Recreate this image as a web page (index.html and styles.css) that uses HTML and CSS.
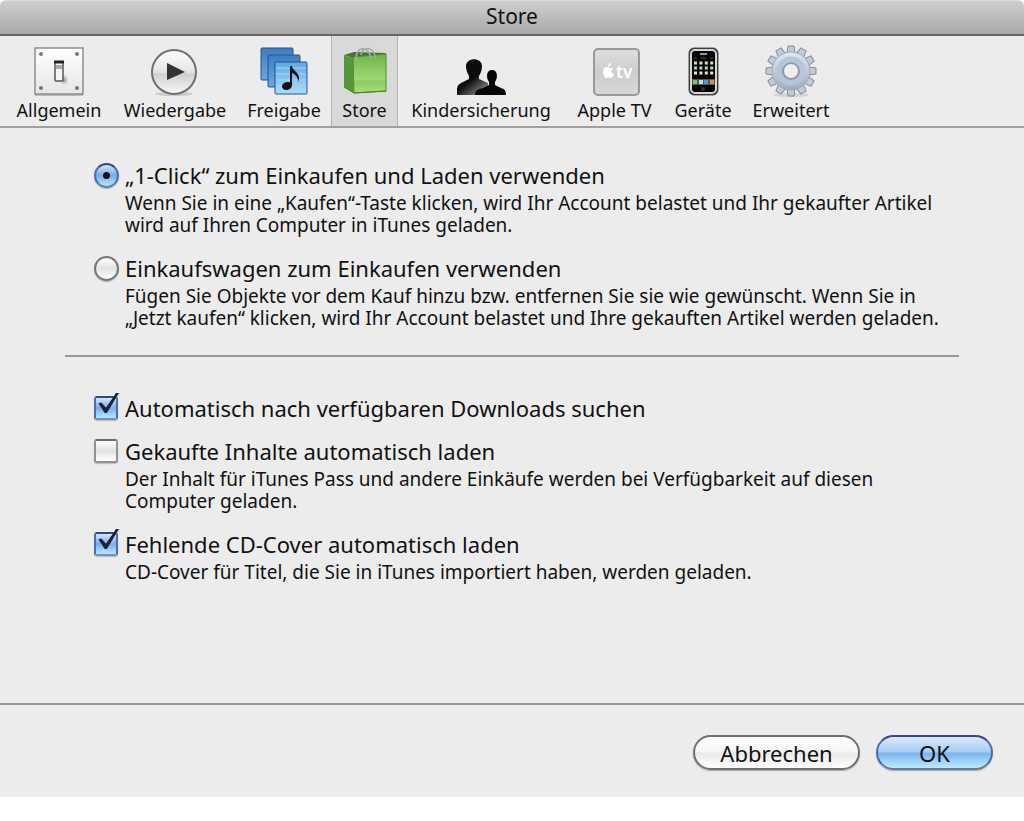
FILE: index.html
```html
<!DOCTYPE html>
<html lang="de">
	<head>
		<meta charset="UTF-8">
		<meta content="width=device-width, initial-scale=1" name="viewport">
		<title>Store</title>
		<link rel="stylesheet" href="styles.css">
	</head>
	<body>
		<form class="window">
			<h1>Store</h1>
			<nav class="toolbar">
				<button type="button" class="tab general">
					<svg viewBox="0 0 52 52">
						<defs>
							<linearGradient id="plate" x2="0" y2="1"><stop offset="0" stop-color="#fff"/><stop offset="1" stop-color="#e6e6e6"/></linearGradient>
							<radialGradient id="shade"><stop offset="0" stop-color="#888"/><stop offset="1" stop-color="#eee" stop-opacity="0"/></radialGradient>
						</defs>
						<rect x="2" y="3" width="48" height="46" fill="url(#plate)" stroke="#8e8e8e" stroke-width="1.5"/>
						<path d="M2 50h48" stroke="#888"/>
						<g fill="#777"><circle cx="8" cy="9" r="2"/><circle cx="44" cy="9" r="2"/><circle cx="8" cy="43" r="2"/><circle cx="44" cy="43" r="2"/></g>
						<ellipse cx="31" cy="35" rx="6" ry="7" fill="url(#shade)"/>
						<rect x="22" y="17" width="8" height="19" rx="1" fill="#f4f4f4" stroke="#555" stroke-width="1.5"/>
						<path d="M21 17h10" stroke="#222" stroke-width="3"/>
						<path d="M23 22h6" stroke="#aaa" stroke-width="4"/>
					</svg>
					Allgemein
				</button>
				<button type="button" class="tab playback">
					<svg viewBox="0 0 52 52">
						<defs>
							<linearGradient id="disc" x2="0" y2="1"><stop offset="0" stop-color="#fff"/><stop offset=".5" stop-color="#e4e4e4"/><stop offset=".55" stop-color="#d0d0d0"/><stop offset="1" stop-color="#f8f8f8"/></linearGradient>
						</defs>
						<ellipse cx="25" cy="49" rx="19" ry="2" fill="#ccc"/>
						<circle cx="25" cy="27" r="22" fill="url(#disc)" stroke="#707070" stroke-width="2"/>
						<path d="M18 18v17l18-8z" fill="#333"/>
					</svg>
					Wiedergabe
				</button>
				<button type="button" class="tab sharing">
					<svg viewBox="0 0 52 52">
						<defs>
							<linearGradient id="sheet" x2="0" y2="1"><stop offset="0" stop-color="#3f7cc0"/><stop offset="1" stop-color="#6aa8e2"/></linearGradient>
							<linearGradient id="front" x2="0" y2="1"><stop offset="0" stop-color="#5fa8e4"/><stop offset="1" stop-color="#a9dcfa"/></linearGradient>
						</defs>
						<g stroke="#24538d" stroke-width="1">
							<rect x="3" y="3" width="32" height="32" rx="1" fill="url(#sheet)"/>
							<rect x="10" y="10" width="32" height="32" rx="1" fill="url(#sheet)"/>
							<rect x="17" y="17" width="32" height="32" rx="1" fill="url(#front)"/>
						</g>
						<path d="M18 23h30M18 29h30M18 35h30M18 41h30" stroke="#a5d6f6"/>
						<ellipse cx="29" cy="41" rx="5" ry="4" fill="#111" transform="rotate(-15 29 41)"/>
						<path d="M32 41V21h2c1 5 8 7 7 13l-1 3c0-5-2-7-6-9v13z" fill="#111"/>
					</svg>
					Freigabe
				</button>
				<button type="button" class="tab store active">
					<svg viewBox="0 0 52 52">
						<defs>
							<linearGradient id="bag" x2="0" y2="1"><stop offset="0" stop-color="#6fb34b"/><stop offset=".65" stop-color="#9fda73"/><stop offset=".7" stop-color="#8bcb5f"/><stop offset="1" stop-color="#a9e07b"/></linearGradient>
						</defs>
						<path d="M5 10l10-3 32 1-1 3-32 2z" fill="#46762f"/>
						<path d="M5 10l9 3 1 35-10-6z" fill="#54983a"/>
						<path d="M14 12l33-3v37l-32 2z" fill="url(#bag)" stroke="#4f8a36"/>
						<path d="M17 15c-1-14 13-15 15-2M22 10c1-9 14-9 14 3" fill="none" stroke="#a3ada8" stroke-width="1.6"/>
						<path d="M5 42l10 6 32-2" fill="none" stroke="#467e30"/>
					</svg>
					Store
				</button>
				<button type="button" class="tab parental">
					<svg viewBox="0 0 52 52">
						<defs>
							<linearGradient id="shirt" x1=".2" x2=".9" y2="1"><stop offset=".5" stop-color="#0c0c0c"/><stop offset="1" stop-color="#999"/></linearGradient>
						</defs>
						<path d="M2 50v-6q0-4 4-6l8-4v-3c-2-3-3-7-3-10 0-9 16-9 16 0 0 3-1 7-3 10v3l9 4v12z" fill="url(#shirt)"/>
						<path d="M20 50c0-6 5-6 8-7l6-3v-3c-3-4-3-12 3-12s6 8 3 12v3l6 3c3 1 5 2 5 7z" fill="#080808"/>
					</svg>
					Kindersicherung
				</button>
				<button type="button" class="tab appletv">
					<svg viewBox="0 0 52 52">
						<defs>
							<linearGradient id="box" x2="0" y2="1"><stop offset="0" stop-color="#dedede"/><stop offset=".5" stop-color="#cdcdcd"/><stop offset="1" stop-color="#d8d8d8"/></linearGradient>
						</defs>
						<rect x="5" y="4" width="45" height="46" rx="4" fill="url(#box)" stroke="#989898" stroke-width="2"/>
						<path d="M20 23c-2-2-6-1-6 4 0 3 2 7 4 6s2-1 3 0 4-2 4-4c-3-1-3-4-1-5-1-2-2-1-4-1zM19 22c0-2 1-4 3-4 0 2-1 4-3 4z" fill="#fff"/>
						<text x="27" y="33" class="tv">tv</text>
					</svg>
					Apple TV
				</button>
				<button type="button" class="tab devices">
					<svg viewBox="0 0 52 52">
						<rect x="12" y="3" width="29" height="47" rx="5" fill="#222" stroke="#555"/>
						<rect x="14" y="5" width="25" height="43" rx="4" fill="#050505" stroke="#d6d6d6" stroke-width="2"/>
						<path d="M23 9h7" stroke="#999" stroke-width="2"/>
						<path d="M17 13h3M24 13h5M33 13h3" stroke="#555"/>
						<g fill="none" stroke-width="3" stroke-dasharray="3 2.4">
							<path d="M17 18h20" stroke="#d8dfac"/>
							<path d="M17 23h20" stroke="#b3d5ce"/>
							<path d="M17 28h20" stroke="#e8e2c9"/>
						</g>
						<path d="M15 34h23v6H15z" fill="#555"/>
						<g stroke-width="4">
							<path d="M16 37h4" stroke="#7bc36a"/>
							<path d="M22 37h4" stroke="#b7e2ef"/>
							<path d="M27 37h4" stroke="#5799d4"/>
							<path d="M33 37h4" stroke="#e58b45"/>
						</g>
						<circle cx="26" cy="44" r="2" fill="#333"/>
					</svg>
					Geräte
				</button>
				<button type="button" class="tab advanced">
					<svg viewBox="0 0 52 52">
						<defs>
							<linearGradient id="gear" x2="0" y2="1"><stop offset="0" stop-color="#e2e7f0"/><stop offset="1" stop-color="#a3acbd"/></linearGradient>
							<path id="tooth" d="M22 8l1-7h6l1 7z"/>
						</defs>
						<ellipse cx="26" cy="50" rx="18" ry="2" fill="#d4d4d4"/>
						<g fill="#c3cbd9" stroke="#858d9c">
							<use href="#tooth"/>
							<use href="#tooth" transform="rotate(30 26 26)"/>
							<use href="#tooth" transform="rotate(60 26 26)"/>
							<use href="#tooth" transform="rotate(90 26 26)"/>
							<use href="#tooth" transform="rotate(120 26 26)"/>
							<use href="#tooth" transform="rotate(150 26 26)"/>
							<use href="#tooth" transform="rotate(180 26 26)"/>
							<use href="#tooth" transform="rotate(210 26 26)"/>
							<use href="#tooth" transform="rotate(240 26 26)"/>
							<use href="#tooth" transform="rotate(270 26 26)"/>
							<use href="#tooth" transform="rotate(300 26 26)"/>
							<use href="#tooth" transform="rotate(330 26 26)"/>
						</g>
						<circle cx="26" cy="26" r="19" fill="url(#gear)" stroke="#a0a9b9"/>
						<circle cx="26" cy="26" r="12" fill="none" stroke="#b7c4dc" stroke-width="5"/>
						<circle cx="26" cy="26" r="8" fill="#eee" stroke="#8e99ad" stroke-width="2"/>
					</svg>
					Erweitert
				</button>
			</nav>
			<main>
				<div class="option">
					<input type="radio" name="kauf" id="oneclick" checked>
					<label for="oneclick">„1-Click“ zum Einkaufen und Laden verwenden</label>
					<p>Wenn Sie in eine „Kaufen“-Taste klicken, wird Ihr Account belastet und Ihr gekaufter Artikel<br>wird auf Ihren Computer in iTunes geladen.</p>
				</div>
				<div class="option">
					<input type="radio" name="kauf" id="wagen">
					<label for="wagen">Einkaufswagen zum Einkaufen verwenden</label>
					<p>Fügen Sie Objekte vor dem Kauf hinzu bzw. entfernen Sie sie wie gewünscht. Wenn Sie in<br>„Jetzt kaufen“ klicken, wird Ihr Account belastet und Ihre gekauften Artikel werden geladen.</p>
				</div>
				<hr>
				<div class="option short">
					<input type="checkbox" id="suchen" checked>
					<label for="suchen">Automatisch nach verfügbaren Downloads suchen</label>
				</div>
				<div class="option">
					<input type="checkbox" id="laden">
					<label for="laden">Gekaufte Inhalte automatisch laden</label>
					<p>Der Inhalt für iTunes Pass und andere Einkäufe werden bei Verfügbarkeit auf diesen<br>Computer geladen.</p>
				</div>
				<div class="option">
					<input type="checkbox" id="cover" checked>
					<label for="cover">Fehlende CD-Cover automatisch laden</label>
					<p>CD-Cover für Titel, die Sie in iTunes importiert haben, werden geladen.</p>
				</div>
			</main>
			<footer>
				<button type="button" class="btn cancel">Abbrechen</button>
				<button type="button" class="btn ok">OK</button>
			</footer>
		</form>
	</body>
</html>
```
FILE: styles.css
```css
* {
	box-sizing: border-box;
}
body {
	margin: 0;
	background: #fff;
	color: #111;
	font-family: "Noto Sans", "Open Sans", sans-serif;
}
.window {
	display: flex;
	flex-direction: column;
	min-height: calc(100vh - 24px);
	background: #ececec;
	border-radius: 6px 6px 0 0;
}
h1 {
	margin: 0;
	height: 36px;
	border-top: solid 1px #ddd;
	border-bottom: solid 2px #666;
	border-radius: 6px 6px 0 0;
	background: linear-gradient(#cecece, #a9a9a9);
	font-size: 21px;
	font-weight: normal;
	line-height: 30px;
	text-align: center;
}
.toolbar {
	display: flex;
	height: 92px;
	padding-left: 5px;
	border-bottom: solid 2px #a0a0a0;
}
.tab {
	display: flex;
	flex-direction: column;
	align-items: center;
	padding: 9px 0 0;
	border: 0;
	background: none;
	color: #111;
	font: 18px/26px "Noto Sans", "Open Sans", sans-serif;
	white-space: nowrap;
}
.tab svg {
	width: 52px;
	height: 52px;
	flex-shrink: 0;
}
.general { width: 108px }
.playback { width: 124px }
.sharing { width: 94px }
.store { width: 67px }
.parental { width: 166px }
.appletv { width: 101px }
.devices { width: 76px }
.advanced { width: 100px }
.active {
	border: solid 1px #b4b4b4;
	border-width: 0 1px;
	background: #d9d9d9;
}
.tv {
	fill: #fff;
	font-size: 17px;
	font-weight: 600;
}
main {
	flex: 1;
	padding: 33px 65px 0;
}
.option {
	display: grid;
	grid-template-columns: 25px 1fr;
	column-gap: 6px;
	align-items: center;
	margin: 0 0 18px 29px;
}
.option.short {
	margin-bottom: 15px;
}
.option label {
	font-size: 22px;
	line-height: 28px;
}
.option p {
	grid-column: 2;
	margin: 3px 0 0;
	font-size: 19px;
	line-height: 22px;
	white-space: nowrap;
}
hr {
	margin: 26px 0 37px;
	border: 0;
	border-top: solid 2px #999;
}
input {
	appearance: none;
	position: relative;
	width: 24px;
	height: 24px;
	margin: 0;
	border: solid 2px #777;
	background: linear-gradient(#fff, #e2e2e2 50%, #fff);
}
input[type=radio] {
	width: 25px;
	height: 25px;
	border-radius: 50%;
	box-shadow: 0 1px 1px #aaa;
}
input[type=checkbox] {
	border-color: #6c6c6c #929292 #929292;
	border-radius: 3px;
	box-shadow: 0 1px 1px #bbb;
}
input:checked {
	border-color: #30458d #4b6fa8 #64809f;
	background: linear-gradient(#d3e5fa, #76aeea 50%, #b9e6ff);
}
input[type=checkbox]:checked {
	border-color: #30458d #4b6fa8 #7893b0;
}
input[type=radio]:checked::after {
	content: "";
	position: absolute;
	top: 7px;
	left: 7px;
	width: 7px;
	height: 7px;
	border-radius: 50%;
	background: #111;
}
input[type=checkbox]:checked::after {
	content: "";
	position: absolute;
	top: -5px;
	left: 2px;
	width: 21px;
	height: 20px;
	background: #1b2238;
	clip-path: polygon(2% 52%, 16% 48%, 38% 74%, 86% 0, 100% 0, 42% 100%, 32% 100%);
}
footer {
	display: flex;
	justify-content: flex-end;
	gap: 16px;
	height: 94px;
	padding: 30px 31px 0;
	border-top: solid 2px #999;
}
.btn {
	height: 35px;
	padding: 0;
	border: solid 2px #707070;
	border-radius: 18px;
	background: linear-gradient(#fff, #f6f6f6 48%, #e9e9e9 52%, #fff);
	box-shadow: 0 1px 1px #aaa;
	color: #111;
	font: 22px/28px "Noto Sans", "Open Sans", sans-serif;
}
.cancel { width: 167px }
.ok {
	width: 117px;
	border-color: #39429a #4c6bab #67799b;
	background: linear-gradient(#d9e9fb, #a6cdf4 48%, #7ab5ee 52%, #bdeaff);
}
```
